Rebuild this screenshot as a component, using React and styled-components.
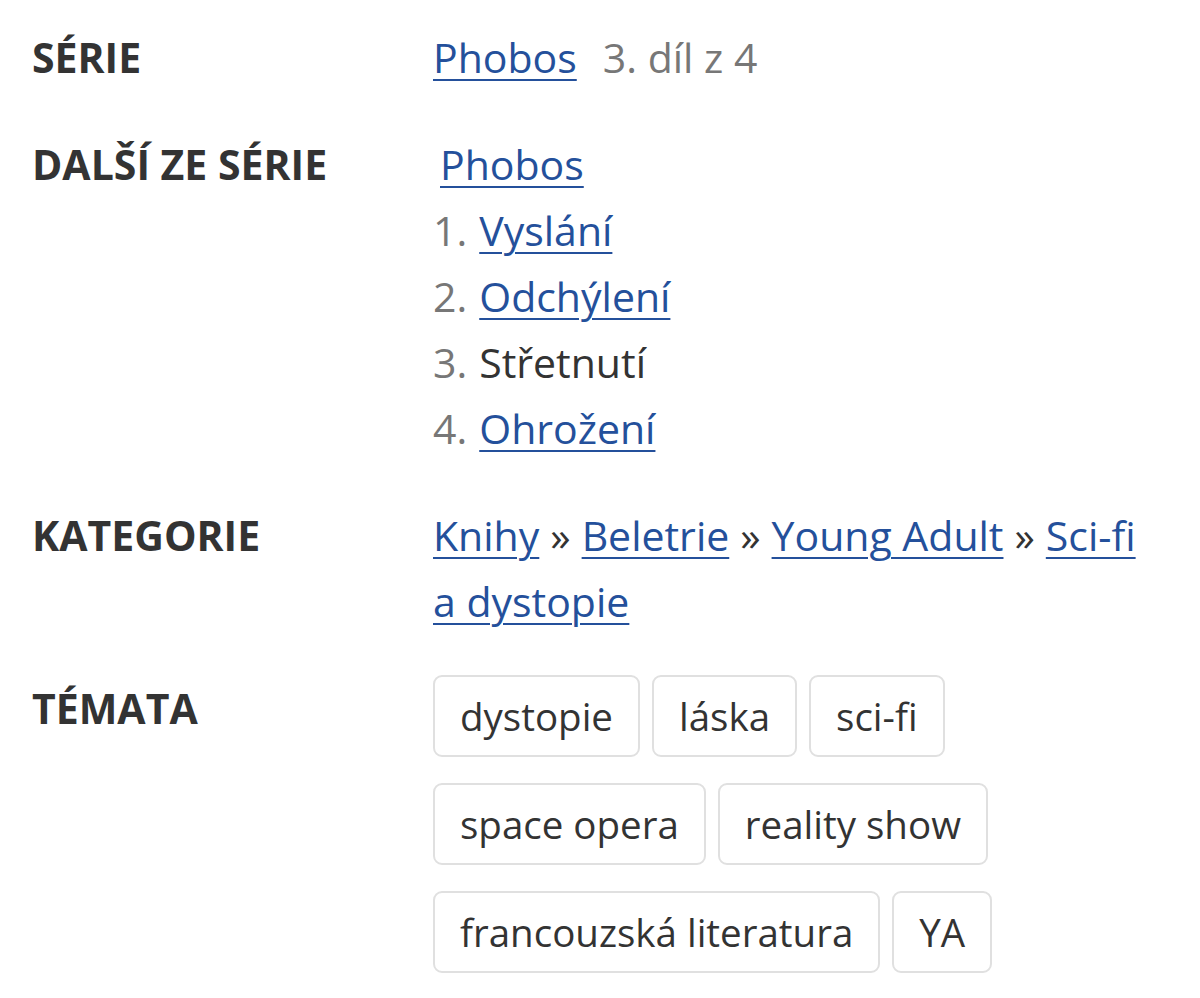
import styled, { createGlobalStyle } from "styled-components";

const GlobalStyle = createGlobalStyle`
  html, body {
    margin: 0;
    padding: 0;
    background: #fff;
  }
  body {
    font-family: "Open Sans", "Liberation Sans", sans-serif;
    color: #333;
  }
`;

const Details = styled.dl`
  display: grid;
  grid-template-columns: 401px 1fr;
  row-gap: 41px;
  margin: 0;
  padding: 24px 24px 20px 32px;
  font-size: 41px;
  line-height: 66px;
`;

const Label = styled.dt`
  font-weight: 700;
  font-size: 41px;
  text-transform: uppercase;
  color: #333;
`;

const Value = styled.dd`
  margin: 0;
  color: #333;
`;

const Link = styled.a`
  color: #24509b;
  text-decoration: underline;
  text-decoration-thickness: 2px;
  text-underline-offset: 6px;
  margin-left: ${(p) => (p.$indent ? "7px" : "0")};
`;

const Muted = styled.span`
  color: #777;
  margin-left: 26px;
`;

const SeriesList = styled.ol`
  list-style: none;
  margin: 0;
  padding: 0;
`;

const SeriesItem = styled.li`
  display: flex;
  gap: 12px;
`;

const Num = styled.span`
  color: #777;
`;

const Sep = styled.span`
  color: #333;
  margin: 0 11px;
`;

const Tags = styled.div`
  display: flex;
  flex-wrap: wrap;
  column-gap: 12px;
  row-gap: 26px;
  max-width: 600px;
`;

const Tag = styled.span`
  display: inline-flex;
  align-items: center;
  height: 82px;
  box-sizing: border-box;
  padding: 0 25px;
  border: 2px solid #e0e0e0;
  border-radius: 9px;
  color: #333;
  font-size: 38.5px;
`;

const series = [
  { n: 1, title: "Vyslání", link: true },
  { n: 2, title: "Odchýlení", link: true },
  { n: 3, title: "Střetnutí", link: false },
  { n: 4, title: "Ohrožení", link: true },
];

const categories = ["Knihy", "Beletrie", "Young Adult", "Sci-fi a\u00a0dystopie"];

const topics = [
  "dystopie",
  "láska",
  "sci-fi",
  "space opera",
  "reality show",
  "francouzská literatura",
  "YA",
];

export default function App() {
  return (
    <>
      <GlobalStyle />
      <Details>
        <Label>Série</Label>
        <Value>
          <Link href="#">Phobos</Link>
          <Muted>3. díl z 4</Muted>
        </Value>

        <Label>Další ze série</Label>
        <Value>
          <Link href="#" $indent>
            Phobos
          </Link>
          <SeriesList>
            {series.map((s) => (
              <SeriesItem key={s.n}>
                <Num>{s.n}.</Num>
                {s.link ? <Link href="#">{s.title}</Link> : <span>{s.title}</span>}
              </SeriesItem>
            ))}
          </SeriesList>
        </Value>

        <Label>Kategorie</Label>
        <Value>
          {categories.map((c, i) => (
            <span key={c}>
              {i > 0 && <Sep>»</Sep>}
              <Link href="#">{c}</Link>
            </span>
          ))}
        </Value>

        <Label>Témata</Label>
        <Value>
          <Tags>
            {topics.map((t) => (
              <Tag key={t}>{t}</Tag>
            ))}
          </Tags>
        </Value>
      </Details>
    </>
  );
}
